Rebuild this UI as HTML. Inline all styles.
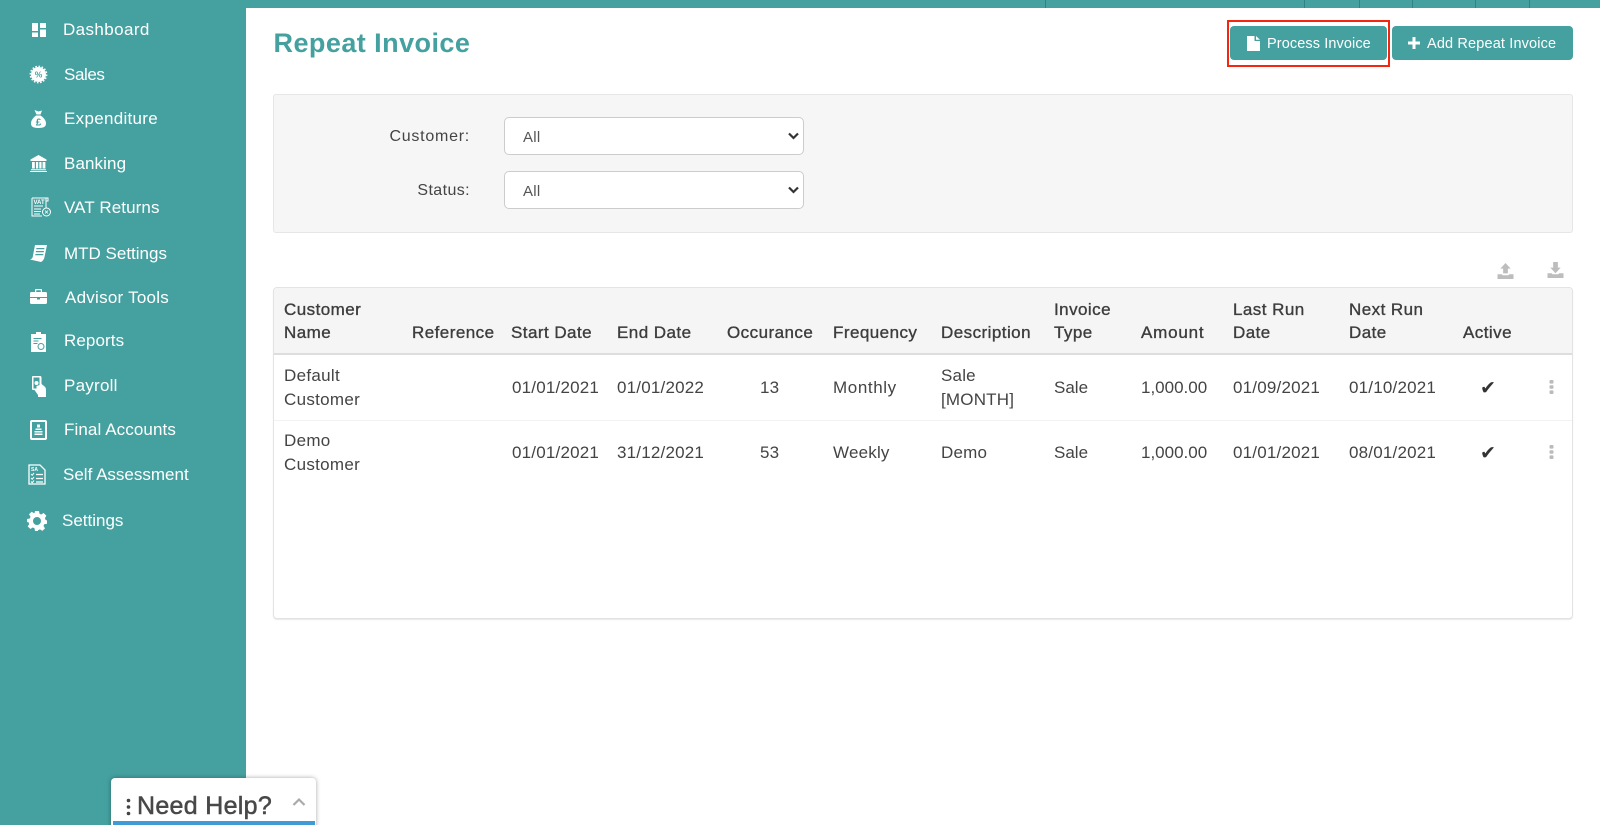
<!DOCTYPE html>
<html lang="en"><head><meta charset="utf-8"><title>Repeat Invoice</title>
<style>
*{box-sizing:border-box}
html,body{margin:0;padding:0;background:#fff;width:1600px;height:825px;overflow:hidden;font-family:"Liberation Sans",sans-serif;color:#3d3d3d}
#wrap{position:relative;width:1600px;height:825px;overflow:hidden}
.a{position:absolute}
#side{position:absolute;left:0;top:0;width:246px;height:825px;background:#44a1a0}
#top{position:absolute;left:246px;top:0;width:1354px;height:8px;background:#44a1a0}
#top i{position:absolute;top:0;width:1px;height:8px;background:#2f8482}
.n{position:absolute;color:#fff;font-size:17px;line-height:20px;white-space:nowrap}
.ic{position:absolute;fill:#fff;stroke:none}
h1{position:absolute;left:273.5px;top:26px;margin:0;font-size:27px;line-height:34px;font-weight:700;color:#44a1a0;letter-spacing:.45px}
.btn{position:absolute;top:26px;height:34px;background:#44a1a0;border-radius:4px;color:#fff;font-size:14.5px;line-height:37px;white-space:nowrap}
#red{position:absolute;left:1227px;top:20px;width:163px;height:47px;border:2.5px solid #f5260f}
#panel{position:absolute;left:273px;top:94px;width:1300px;height:139px;background:#f6f6f6;border:1px solid #e6e6e6;border-radius:3px}
.lb{position:absolute;width:120px;left:350px;text-align:right;font-size:16px;line-height:20px;color:#444}
.sel{position:absolute;left:504px;width:300px;height:38px;background:#fff;border:1px solid #ccc;border-radius:5px;font-family:inherit;font-size:15px;letter-spacing:.3px;color:#555;padding:2px 0 0 18px;appearance:none;-webkit-appearance:none}
#tb{position:absolute;left:273px;top:287px;width:1300px;height:332px;background:#fff;border:1px solid #e3e3e3;border-radius:4px;box-shadow:0 1px 1px #e8e8e8}
#th{position:absolute;left:274px;top:288px;width:1298px;height:67px;background:#f5f5f5;border-bottom:2px solid #ddd;border-radius:3px 3px 0 0}
#rs{position:absolute;left:274px;top:420px;width:1298px;height:1px;background:#f2f2f2}
.h,.c{position:absolute;font-size:17px;line-height:23.5px;white-space:nowrap;letter-spacing:.2px}
.h{color:#3d3d3d;-webkit-text-stroke:.35px #3d3d3d;letter-spacing:.45px}
.c{color:#444}
.ck{position:absolute;font-family:"DejaVu Sans",sans-serif;font-size:19px;line-height:20px;color:#333}
.dots{position:absolute;width:5px;height:14px}
#help{position:absolute;left:111px;top:778px;width:205px;height:60px;background:#fff;border-radius:4px;box-shadow:0 0 5px rgba(0,0,0,.35)}
#hl{position:absolute;left:113px;top:821px;width:202px;height:4px;background:#3f9bd6}
</style></head><body><div id="wrap">
<div id="side"></div>
<div id="top"><i style="left:799px"></i><i style="left:1058px"></i><i style="left:1113px"></i><i style="left:1166px"></i><i style="left:1229px"></i><i style="left:1283px"></i></div>

<svg class="ic" style="left:32px;top:23px" width="14" height="14" viewBox="0 0 14 14"><path d="M0 0h6v8H0zM8 0h6v5H8zM8 6.500h6V14H8zM0 9.500h6V14H0z"/></svg>
<div class="n" style="left:63px;top:20px;letter-spacing:.4px">Dashboard</div>
<svg class="ic" style="left:29px;top:65px" width="19" height="19" viewBox="0 0 19 19"><circle cx="9.500" cy="9.500" r="7.500"/><circle cx="9.500" cy="9.500" r="8.200" fill="none" stroke="#fff" stroke-width="1.400" stroke-dasharray="1.600 1.600"/><text x="9.500" y="12.500" text-anchor="middle" font-size="8.500" font-weight="700" fill="#44a1a0" font-family="Liberation Sans">%</text></svg>
<div class="n" style="left:64px;top:65px;letter-spacing:-.4px">Sales</div>
<svg class="ic" style="left:31px;top:110px" width="15" height="18" viewBox="0 0 15 18"><path d="M3.500 0l4 1.500L11 .5 9.500 4.500h-4zM5 5.500h4.500c3 2 5.500 4.500 5.500 8 0 3-2 4.500-7.500 4.500S0 16.500 0 13.500c0-3.500 2.500-6 5-8z"/><text x="7.500" y="15.500" text-anchor="middle" font-size="10" font-weight="700" fill="#44a1a0" font-family="Liberation Sans">£</text></svg>
<div class="n" style="left:64px;top:109px;letter-spacing:.3px">Expenditure</div>
<svg class="ic" style="left:30px;top:155px" width="17" height="17" viewBox="0 0 17 17"><path d="M8.500 0L16.500 4.500V6H.5V4.500zM2 7h2.800v6.500H2zM6 7h2.200v6.500H6zM9.300 7h2.200v6.500H9.300zM12.600 7h2.800v6.500h-2.800zM1 14.300h15V15.300H1zM0 16h17v1H0z"/></svg>
<div class="n" style="left:64px;top:154px;letter-spacing:.1px">Banking</div>
<svg class="ic" style="left:31px;top:197px;fill:none;stroke:#fff" width="21" height="21" viewBox="0 0 21 21"><path d="M1 1h14v10M1 1v18h10M13 1h4v3h-2" stroke-width="1"/><circle cx="15.500" cy="15" r="4" stroke-width="1"/><path d="M14 13.500l3 3M17 13.500l-3 3" stroke-width=".8"/><path d="M3 9h9M3 12h7M3 14.500h7M3 17h6" stroke-width="1"/><text x="2.500" y="7" font-size="6" font-weight="700" fill="#fff" stroke="none" font-family="Liberation Sans">VAT</text></svg>
<div class="n" style="left:64px;top:198px;letter-spacing:.1px">VAT Returns</div>
<svg class="ic" style="left:30px;top:245px" width="17" height="17" viewBox="0 0 17 17"><path d="M5 0h12l-2.500 12c-.3 2-1.500 4-3.500 5L0 14.500c1-.3 2.500-1 2.800-3zM6.500 3l-.3 1.200h8L14.500 3zM6 6l-.3 1.200h8L14 6zM5.500 9l-.3 1.200h8l.2-1.200z" fill-rule="evenodd"/></svg>
<div class="n" style="left:64px;top:244px;letter-spacing:0">MTD Settings</div>
<svg class="ic" style="left:30px;top:289px" width="17" height="15" viewBox="0 0 17 15"><path d="M6 0h5a1 1 0 0 1 1 1v2h3.500A1.500 1.500 0 0 1 17 4.500V8H0V4.500A1.500 1.500 0 0 1 1.500 3H5V1a1 1 0 0 1 1-1zm.2 1.300V3h4.600V1.300zM0 9h7v1.500h3V9h7v4.500a1.500 1.500 0 0 1-1.500 1.500h-14A1.500 1.500 0 0 1 0 13.500z" fill-rule="evenodd"/></svg>
<div class="n" style="left:65px;top:288px;letter-spacing:.25px">Advisor Tools</div>
<svg class="ic" style="left:31px;top:332px" width="15" height="20" viewBox="0 0 15 20"><path d="M5 0h5v2h5v18H0V2h5zM2.500 6v1h8V6zM2.500 8.500v1h5v-1zM2.500 11v1h4v-1z" fill-rule="evenodd"/><circle cx="10" cy="14.500" r="3.500" fill="#44a1a0"/><circle cx="10" cy="14.500" r="2.500" fill="#fff"/></svg>
<div class="n" style="left:64px;top:331px;letter-spacing:.1px">Reports</div>
<svg class="ic" style="left:32px;top:376px" width="14" height="21" viewBox="0 0 14 21"><path d="M1 0h7c1 0 1.500.5 1.500 1.500V8L12 10c1.300 1 2 2 2 4v7H6v-2L2.500 14H1c-.6 0-1-.5-1-1V1c0-.6.4-1 1-1zM1.500 1.500V12.500h3V10l3-1V1.500z" fill-rule="evenodd"/><circle cx="4.500" cy="7" r="2"/></svg>
<div class="n" style="left:64px;top:376px;letter-spacing:.25px">Payroll</div>
<svg class="ic" style="left:30px;top:420px" width="17" height="20" viewBox="0 0 17 20"><path d="M2 0h13a2 2 0 0 1 2 2v16a2 2 0 0 1-2 2H2a2 2 0 0 1-2-2V2a2 2 0 0 1 2-2zm0 2v16h13V2z" fill-rule="evenodd"/><path d="M7 4.500h3v3H7zM5.500 8.500h6v1.500h-6zM4.500 11h8v1.500h-8zM4.500 13.500h8V15h-8z"/></svg>
<div class="n" style="left:64px;top:420px;letter-spacing:.1px">Final Accounts</div>
<svg class="ic" style="left:28px;top:464px;fill:none;stroke:#fff" width="18" height="21" viewBox="0 0 18 21"><path d="M1 1h11l5 5v14H1z" stroke-width="1.300"/><path d="M3 10l1.200 1.200L6 9M3 14l1.200 1.200L6 13M3 17.500l1.200 1.200L6 16.500" stroke-width="1"/><path d="M8 10.500h7M8 14.500h7M8 18h7" stroke-width="1.300"/><text x="3" y="7" font-size="5" font-weight="700" fill="#fff" stroke="none" font-family="Liberation Sans">SA</text></svg>
<div class="n" style="left:63px;top:465px;letter-spacing:0">Self Assessment</div>
<svg class="ic" style="left:27px;top:511px" width="20" height="20" viewBox="0 0 20 20"><path fill-rule="evenodd" d="M8 0h4l.5 2.800 1.700.7L16.600 2l2.800 2.800-1.500 2.300.7 1.800L20 9.500v3.300l-2.800.5-.7 1.700 1.500 2.400-2.600 2.500-2.400-1.500-1.800.7L10.700 20H8l-.5-2.800-1.800-.7-2.300 1.500L.7 15.400l1.500-2.300-.7-1.800L0 11V8l2.800-.5.7-1.800L2 3.300 4.700.7 7 2.200l.6-.3zM10 6a4 4 0 1 0 0 8 4 4 0 0 0 0-8z"/></svg>
<div class="n" style="left:62px;top:511px;letter-spacing:0">Settings</div>

<h1>Repeat Invoice</h1>
<div id="red"></div>
<div class="btn" style="left:1230px;width:157px"><svg class="a" style="left:17px;top:10px" width="13" height="15" viewBox="0 0 13 15" fill="#fff"><path d="M0 0h7.500v5H13v10H0zM9 0l4 3.800H9z"/></svg><span class="a" style="left:37px;top:0;letter-spacing:.1px">Process Invoice</span></div>
<div class="btn" style="left:1392px;width:181px"><svg class="a" style="left:16px;top:11px" width="12" height="12" viewBox="0 0 12 12" fill="#fff"><path d="M4.500 0h3v4.500H12v3H7.500V12h-3V7.500H0v-3h4.500z"/></svg><span class="a" style="left:35px;top:0;letter-spacing:.15px">Add Repeat Invoice</span></div>

<div id="panel"></div>
<div class="lb" style="top:127px;letter-spacing:.75px">Customer:</div>
<select class="sel" style="top:117px"><option>All</option></select>
<svg class="a" style="left:788px;top:132px" width="11" height="8" viewBox="0 0 11 8" fill="none" stroke="#333" stroke-width="2.200"><path d="M1 1.500l4.500 4.500L10 1.500"/></svg>
<div class="lb" style="top:181px;letter-spacing:.4px">Status:</div>
<select class="sel" style="top:171px"><option>All</option></select>
<svg class="a" style="left:788px;top:186px" width="11" height="8" viewBox="0 0 11 8" fill="none" stroke="#333" stroke-width="2.200"><path d="M1 1.500l4.500 4.500L10 1.500"/></svg>

<svg class="a" style="left:1497px;top:263px" width="17" height="16" viewBox="0 0 17 17" fill="#bdbdbd"><path d="M8.500 0L14 6h-3v5H6V6H3zM0 12h4.500l1 1h6l1-1H17v5H0z"/></svg>
<svg class="a" style="left:1547px;top:262px" width="17" height="16" viewBox="0 0 17 17" fill="#bdbdbd"><path d="M6 0h5v6h3l-5.500 6L3 6h3zM0 12h4.500l1 1h6l1-1H17v5H0z"/></svg>

<div id="tb"></div><div id="th"></div><div id="rs"></div>

<div class="h" style="left:284px;top:297.500px">Customer<br>Name</div>
<div class="h" style="left:412px;top:320.500px">Reference</div>
<div class="h" style="left:511px;top:320.500px">Start Date</div>
<div class="h" style="left:617px;top:320.500px">End Date</div>
<div class="h" style="left:727px;top:320.500px">Occurance</div>
<div class="h" style="left:833px;top:320.500px">Frequency</div>
<div class="h" style="left:941px;top:320.500px">Description</div>
<div class="h" style="left:1054px;top:297.500px">Invoice<br>Type</div>
<div class="h" style="left:1141px;top:320.500px;letter-spacing:.8px">Amount</div>
<div class="h" style="left:1233px;top:297.500px">Last Run<br>Date</div>
<div class="h" style="left:1349px;top:297.500px">Next Run<br>Date</div>
<div class="h" style="left:1463px;top:320.500px">Active</div>

<div class="c" style="left:284px;top:364px;letter-spacing:.3px">Default<br>Customer</div>
<div class="c" style="left:512px;top:376px">01/01/2021</div>
<div class="c" style="left:617px;top:376px">01/01/2022</div>
<div class="c" style="left:760px;top:376px">13</div>
<div class="c" style="left:833px;top:376px;letter-spacing:.6px">Monthly</div>
<div class="c" style="left:941px;top:364px">Sale<br>[MONTH]</div>
<div class="c" style="left:1054px;top:376px;letter-spacing:0">Sale</div>
<div class="c" style="left:1141px;top:376px;letter-spacing:0">1,000.00</div>
<div class="c" style="left:1233px;top:376px">01/09/2021</div>
<div class="c" style="left:1349px;top:376px">01/10/2021</div>
<div class="ck" style="left:1480px;top:378px">✔</div>
<svg class="dots" style="left:1549px;top:380px" viewBox="0 0 5 14" fill="#bbb"><rect x=".5" y="0" width="4" height="3.600" rx="1"/><rect x=".5" y="5.200" width="4" height="3.600" rx="1"/><rect x=".5" y="10.400" width="4" height="3.600" rx="1"/></svg>

<div class="c" style="left:284px;top:429px;letter-spacing:.3px">Demo<br>Customer</div>
<div class="c" style="left:512px;top:441px">01/01/2021</div>
<div class="c" style="left:617px;top:441px">31/12/2021</div>
<div class="c" style="left:760px;top:441px">53</div>
<div class="c" style="left:833px;top:441px">Weekly</div>
<div class="c" style="left:941px;top:441px">Demo</div>
<div class="c" style="left:1054px;top:441px;letter-spacing:0">Sale</div>
<div class="c" style="left:1141px;top:441px;letter-spacing:0">1,000.00</div>
<div class="c" style="left:1233px;top:441px">01/01/2021</div>
<div class="c" style="left:1349px;top:441px">08/01/2021</div>
<div class="ck" style="left:1480px;top:443px">✔</div>
<svg class="dots" style="left:1549px;top:445px" viewBox="0 0 5 14" fill="#bbb"><rect x=".5" y="0" width="4" height="3.600" rx="1"/><rect x=".5" y="5.200" width="4" height="3.600" rx="1"/><rect x=".5" y="10.400" width="4" height="3.600" rx="1"/></svg>

<div id="help"></div><div id="hl"></div>
<svg class="a" style="left:126px;top:798px" width="5" height="18" viewBox="0 0 5 18" fill="#444"><circle cx="2.500" cy="2.500" r="1.800"/><circle cx="2.500" cy="9" r="1.800"/><circle cx="2.500" cy="15.500" r="1.800"/></svg>
<div class="a" style="left:137px;top:790px;font-size:25px;line-height:32px;color:#484848;letter-spacing:.3px;-webkit-text-stroke:.5px #484848;white-space:nowrap">Need Help?</div>
<svg class="a" style="left:292px;top:797px" width="14" height="10" viewBox="0 0 14 10" fill="none" stroke="#aaa" stroke-width="2.200"><path d="M1.500 8L7 2.500 12.500 8"/></svg>
</div></body></html>
